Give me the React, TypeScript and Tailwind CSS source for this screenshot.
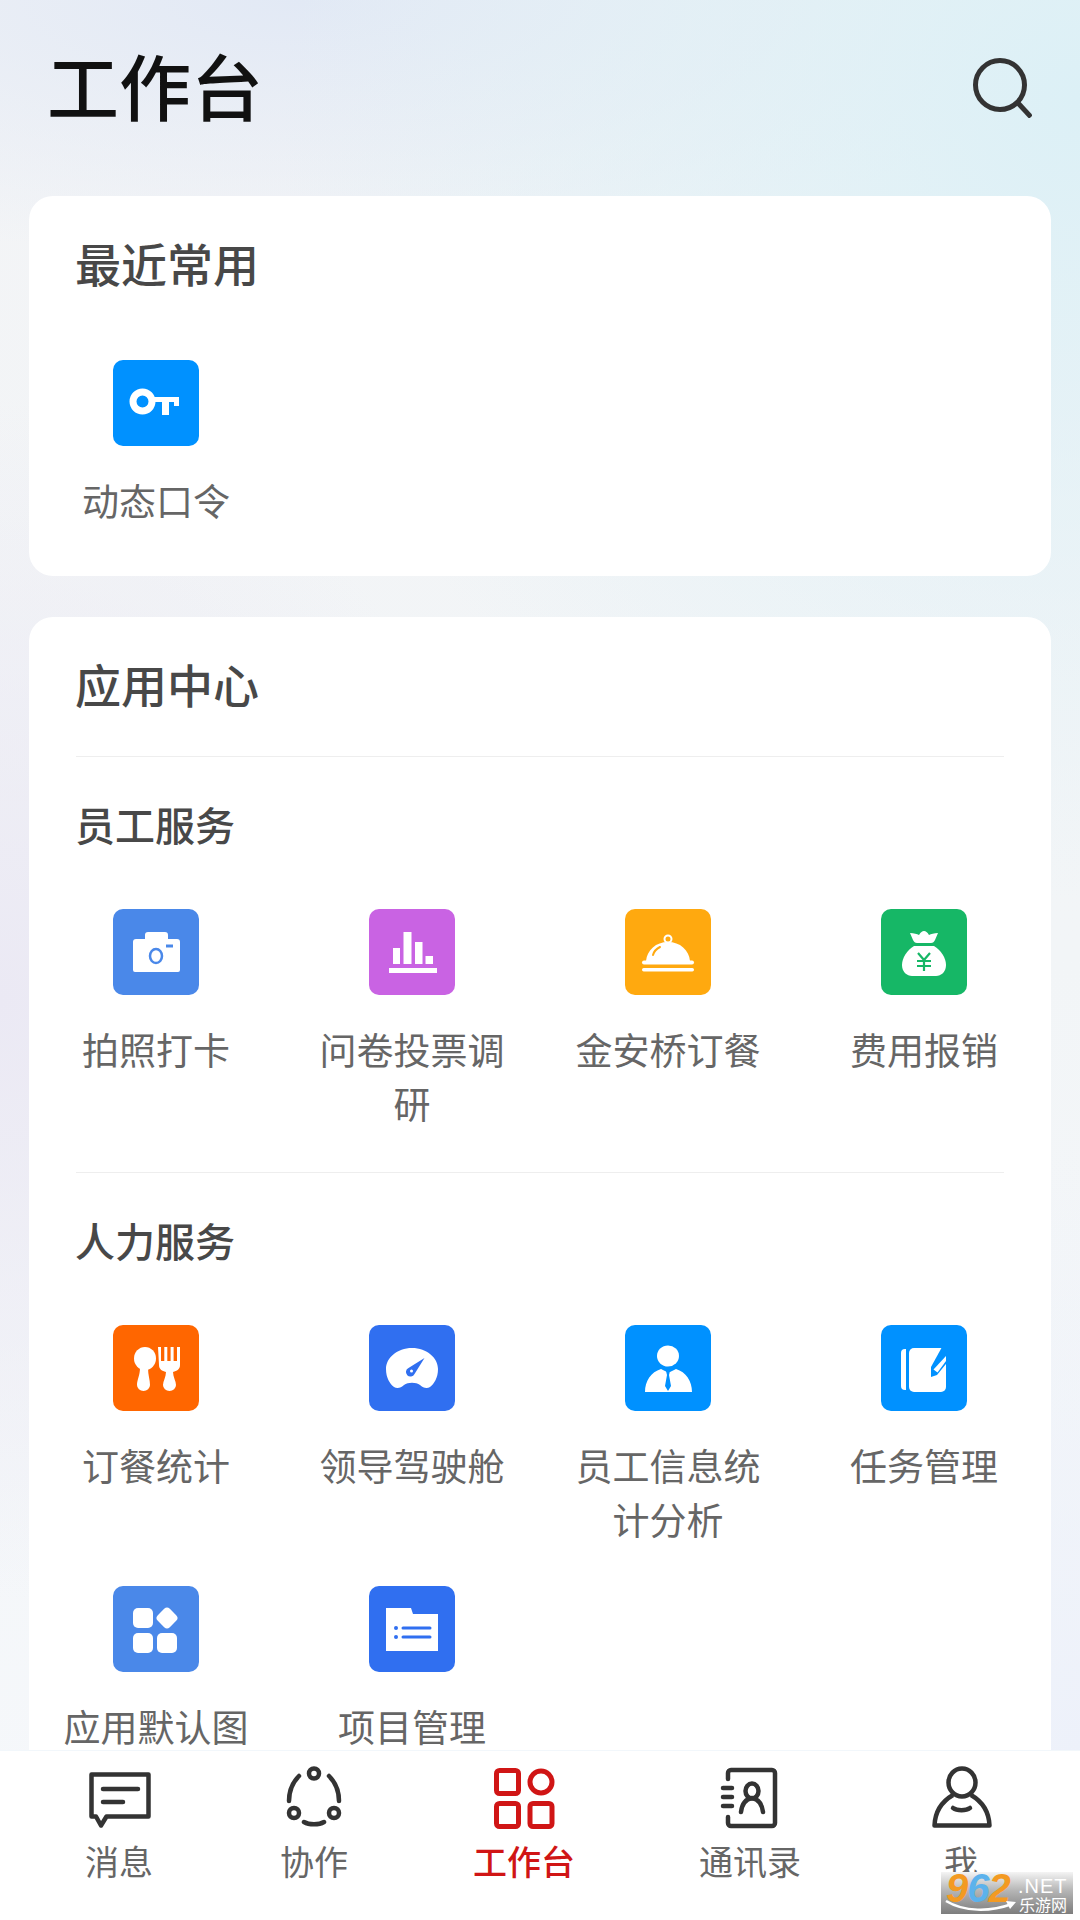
import React from 'react';

const FONT = "font-['Noto_Sans_CJK_SC','Noto_Sans',sans-serif]";

// App tile artwork, all on an 86x86 canvas
const KeyArt = () => (
  <>
    <ellipse cx="29.500" cy="41.500" rx="9.500" ry="9.500" fill="none" stroke="#fff" strokeWidth="7" />
    <path d="M38 37h28v9h-5v-4h-5v13h-7V42H38z" fill="#fff" />
  </>
);

const CameraArt = () => (
  <>
    <path d="M20 33a3 3 0 0 1 3-3h9v-4a3 3 0 0 1 3-3h17a3 3 0 0 1 3 3v4h9a3 3 0 0 1 3 3v28a2 2 0 0 1-2 2H22a2 2 0 0 1-2-2z" fill="#fff" />
    <ellipse cx="43" cy="47" rx="6" ry="7" fill="none" stroke="#4a88e9" strokeWidth="2.500" />
    <path d="M53 37h7" stroke="#4a88e9" strokeWidth="3" />
  </>
);

const ChartArt = () => (
  <path d="M24 39h7v16h-7zM34.500 23h8v32h-8zM46 33h7.500v22H46zM56.500 47H64v8h-7.500zM20 59h48v5H20z" fill="#fff" />
);

const DishArt = () => (
  <>
    <circle cx="43" cy="30" r="3.500" fill="none" stroke="#fff" strokeWidth="2" />
    <path d="M21 52C22 41 31 33 43 33s21 8 22 19z" fill="#fff" />
    <rect x="17" y="51.500" width="52" height="4" rx="2" fill="#fff" />
    <path d="M28 46c1-4 3-6 7-8" stroke="#ffa90f" strokeWidth="2" strokeLinecap="round" fill="none" />
    <rect x="17" y="59" width="52" height="3.500" rx="1.700" fill="#fff" />
  </>
);

const BagArt = () => (
  <>
    <path d="M29 24c4 0 7 1 9 2 2-3 3-4 5-4s3 1 5 4c2-1 5-2 9-2l-3 7c-1 2-2 3-4 3H36c-2 0-3-1-4-3z" fill="#fff" />
    <path d="M33 37h20c7 4 12 12 12 19 0 7-5 11-10 11H31c-5 0-10-4-10-11 0-7 5-15 12-19z" fill="#fff" />
    <path d="M37 44l6 7 6-7M36 52h14M36 57h14M43 51v11" stroke="#16b766" strokeWidth="2.200" fill="none" />
  </>
);

const CutleryArt = () => (
  <>
    <ellipse cx="32" cy="33.500" rx="11" ry="11.500" fill="#fff" />
    <path d="M27 43c0 7-3 12-3 17a6.500 6 0 0 0 13 0c0-5-2-10-2-17z" fill="#fff" />
    <path d="M45 22h3v14h3.300V22h3v14h3.300V22h3v14H64V22h3v18c0 4-3 6-7 7 0 5 3 9 3 13a6.500 6 0 0 1-13 0c0-4 3-8 3-13-4-1-7-3-7-7z" fill="#fff" />
  </>
);

const GaugeArt = () => (
  <>
    <path d="M43 23c15 0 26 10 26 21 0 9-4 15-8 18-3 2-7 1-10-2-4-3-12-3-16 0-3 3-7 4-10 2-4-3-8-9-8-18 0-11 11-21 26-21z" fill="#fff" />
    <path d="M55.500 33L45.500 49a4.500 4.500 0 1 1-6-6z" fill="#306ff0" />
    <circle cx="42.500" cy="46" r="1.500" fill="#fff" />
  </>
);

const PersonArt = () => (
  <>
    <ellipse cx="43" cy="31" rx="11" ry="10.500" fill="#fff" />
    <path d="M36 44c-10 3-16 12-16 23h47c0-11-6-20-16-23l-6 3h-3l-6-3z" fill="#fff" />
    <path d="M41 46h4l-1 4 2 11-3 5-3-5 2-11z" fill="#0091ff" />
  </>
);

const TaskArt = () => (
  <>
    <path d="M20 28a4 4 0 0 1 4-4h1v41h-1a4 4 0 0 1-4-4z" fill="#fff" />
    <rect x="28" y="23" width="37" height="44" rx="5" fill="#fff" />
    <path d="M61 22h8v12L56 50l-6 2V42z" fill="#0091ff" />
    <path d="M65 31v5l-8.500 11.500-4-3z" fill="#fff" />
  </>
);

const AppsArt = () => (
  <>
    <rect x="20" y="22" width="20" height="20" rx="5" fill="#fff" />
    <rect x="20" y="47" width="20" height="20" rx="5" fill="#fff" />
    <rect x="44" y="47" width="20" height="20" rx="5" fill="#fff" />
    <rect x="45.500" y="23.500" width="17" height="17" rx="4" fill="#fff" transform="rotate(45 54 32)" />
  </>
);

const FolderArt = () => (
  <>
    <path d="M17 22h25l2 6h25v37H17z" fill="#fff" />
    <circle cx="27" cy="42" r="2" fill="#306ff0" />
    <circle cx="27" cy="51" r="2" fill="#306ff0" />
    <path d="M34 42h27M34 51h27" stroke="#306ff0" strokeWidth="3" strokeLinecap="round" />
  </>
);

interface AppItem {
  name: string;
  tile: string;
  art: React.ReactNode;
}

const recent: AppItem[] = [{ name: '动态口令', tile: 'bg-[#0091ff]', art: <KeyArt /> }];

const staffApps: AppItem[] = [
  { name: '拍照打卡', tile: 'bg-[#4a88e9]', art: <CameraArt /> },
  { name: '问卷投票调研', tile: 'bg-[#c963e3]', art: <ChartArt /> },
  { name: '金安桥订餐', tile: 'bg-[#ffa90f]', art: <DishArt /> },
  { name: '费用报销', tile: 'bg-[#16b766]', art: <BagArt /> },
];

const hrApps: AppItem[] = [
  { name: '订餐统计', tile: 'bg-[#ff6600]', art: <CutleryArt /> },
  { name: '领导驾驶舱', tile: 'bg-[#306ff0]', art: <GaugeArt /> },
  { name: '员工信息统计分析', tile: 'bg-[#0091ff]', art: <PersonArt /> },
  { name: '任务管理', tile: 'bg-[#0091ff]', art: <TaskArt /> },
  { name: '应用默认图', tile: 'bg-[#4a88e9]', art: <AppsArt /> },
  { name: '项目管理', tile: 'bg-[#306ff0]', art: <FolderArt /> },
];

const AppGrid: React.FC<{ items: AppItem[] }> = ({ items }) => (
  <div className="-ml-[1px] grid grid-cols-[repeat(4,256px)] gap-y-[40px]">
    {items.map(item => (
      <div key={item.name} className="flex flex-col items-center">
        <div className={`h-[86px] w-[86px] rounded-[10px] ${item.tile}`}>
          <svg viewBox="0 0 86 86" className="h-full w-full">
            {item.art}
          </svg>
        </div>
        <div className="mt-[27px] w-[190px] break-all text-center text-[37px] leading-[54px] text-[#666]">
          {item.name}
        </div>
      </div>
    ))}
  </div>
);

const Section: React.FC<{ title: string; items: AppItem[] }> = ({ title, items }) => (
  <div>
    <div className="mx-[47px] h-px bg-[#eeeeee]" />
    <h3 className="mb-[57px] ml-[46px] mt-[39px] text-[40px] font-medium leading-[56px] text-[#484848]">{title}</h3>
    <AppGrid items={items} />
  </div>
);

const navIcon = 'fill-none stroke-[#333] stroke-[4.5]';

const navItems = [
  {
    label: '消息',
    icon: (
      <svg viewBox="0 0 70 70" className={`h-[70px] w-[70px] ${navIcon}`}>
        <path d="M7.500 11.500h57v42h-42l-5.500 9-5-9H7.500z" strokeLinejoin="round" />
        <path d="M19 26h35M19 39h20" strokeLinecap="round" />
      </svg>
    ),
  },
  {
    label: '协作',
    icon: (
      <svg viewBox="0 0 70 70" className={`h-[70px] w-[70px] ${navIcon}`}>
        <circle cx="35" cy="10.500" r="5" />
        <circle cx="15" cy="50" r="5" />
        <circle cx="55" cy="50" r="5" />
        <path d="M20 13C13 20 10 29 10 38M50 13c7 7 10 16 10 25M25 59c5 3 15 3 20 0" strokeLinecap="round" />
      </svg>
    ),
  },
  {
    label: '工作台',
    active: true,
    icon: (
      <svg viewBox="0 0 70 70" className="h-[70px] w-[70px] fill-none stroke-[#d01515] stroke-[5]">
        <rect x="7.500" y="7.500" width="22" height="23" rx="3" />
        <circle cx="52" cy="19" r="11" />
        <rect x="7.500" y="40.500" width="22" height="23" rx="3" />
        <rect x="41" y="40.500" width="22" height="23" rx="3" />
      </svg>
    ),
  },
  {
    label: '通讯录',
    icon: (
      <svg viewBox="0 0 70 70" className={`h-[70px] w-[70px] ${navIcon}`}>
        <path d="M13 16v-6a3 3 0 0 1 3-3h41a3 3 0 0 1 3 3v50a3 3 0 0 1-3 3H16a3 3 0 0 1-3-3v-6" strokeLinecap="round" />
        <path d="M8 25h9M8 34h9M8 43h9" strokeLinecap="round" />
        <ellipse cx="37" cy="28" rx="6.500" ry="7.500" />
        <path d="M26 49c1-8 5-13 11-14 6 1 10 6 11 14" strokeLinecap="round" />
      </svg>
    ),
  },
  {
    label: '我',
    icon: (
      <svg viewBox="0 0 70 70" className={`h-[70px] w-[70px] ${navIcon}`}>
        <ellipse cx="36" cy="19.500" rx="13.500" ry="14" />
        <path d="M27 32C15 39 9 50 8.500 62.500h55C63 50 57 39 45 32" strokeLinejoin="round" />
        <path d="M27 45c4 3 13 3 17 0" strokeLinecap="round" />
      </svg>
    ),
  },
];

export default function App() {
  return (
    <div
      className={`relative flex h-[1920px] w-[1080px] flex-col overflow-hidden bg-[radial-gradient(ellipse_800px_800px_at_1080px_100px,#dcf0f6_0%,transparent_100%),radial-gradient(ellipse_800px_260px_at_300px_0px,#e2e9f5_0%,transparent_100%),radial-gradient(ellipse_500px_600px_at_0px_1000px,#ebe9f4_0%,transparent_100%),radial-gradient(ellipse_500px_600px_at_1080px_1750px,#edf1fa_0%,transparent_100%),linear-gradient(180deg,#f3f4f6_0%,#f2f5f7_50%,#f6f8fb_100%)] ${FONT}`}
    >
      <main className="min-h-0 flex-1 overflow-hidden px-[29px]">
        <header className="mb-[20px] flex h-[176px] items-center justify-between pl-[18px] pr-[19px]">
          <h1 className="pb-[8px] text-[72px] font-medium leading-none text-[#111]">工作台</h1>
          <svg viewBox="0 0 60 60" className="h-[60px] w-[60px] fill-none stroke-[#333] stroke-[5]">
            <circle cx="28" cy="27" r="24.500" />
            <path d="M46 45l13 14" />
          </svg>
        </header>

        <section className="rounded-[24px] bg-white pb-[49px] pt-[36px]">
          <h2 className="mb-[68px] ml-[46px] text-[46px] font-medium leading-[60px] text-[#484848]">最近常用</h2>
          <AppGrid items={recent} />
        </section>

        <section className="mt-[41px] rounded-[24px] bg-white pb-[60px] pt-[36px]">
          <h2 className="mb-[43px] ml-[46px] text-[46px] font-medium leading-[60px] text-[#484848]">应用中心</h2>
          <Section title="员工服务" items={staffApps} />
          <div className="h-[42px]" />
          <Section title="人力服务" items={hrApps} />
        </section>
      </main>

      <nav className="grid h-[170px] shrink-0 grid-cols-[238px_152px_268px_184px_238px] border-t border-[#f2f7fb] bg-white">
        {navItems.map(item => (
          <div key={item.label} className="flex flex-col items-center pt-[12px]">
            <div className="h-[70px]">{item.icon}</div>
            <span
              className={`mt-[4px] text-[34px] leading-[48px] ${item.active ? 'font-medium text-[#d01515]' : 'text-[#666]'}`}
            >
              {item.label}
            </span>
          </div>
        ))}
      </nav>

      {/* site watermark stamped over the corner */}
      <div className="absolute bottom-[6px] right-[7px] h-[42px] w-[132px] overflow-hidden bg-[linear-gradient(180deg,#f4f4f4_0%,#b4b4b4_45%,#7d7d7d_100%)]">
        <div className="absolute left-[5px] top-[-6px] text-[40px] font-bold italic leading-[44px] tracking-[-1px] font-['Liberation_Sans',sans-serif]">
          <span className="text-[#f39a22]">9</span>
          <span className="text-[#5cb2ec]">6</span>
          <span className="text-[#f39a22]">2</span>
        </div>
        <div className="absolute left-[77px] top-[4px] text-[20px] leading-[20px] tracking-[1px] text-white font-['Liberation_Sans',sans-serif]">.NET</div>
        <div className="absolute left-[78px] top-[22px] text-[16px] leading-[20px] text-white">乐游网</div>
        <svg viewBox="0 0 76 14" className="absolute left-[3px] top-[27px] h-[14px] w-[76px] fill-none stroke-white stroke-[2.5]">
          <path d="M2 2c18 11 44 11 66 3" />
          <path d="M62 2l10 1-6 7z" fill="#fff" stroke="none" />
        </svg>
      </div>
    </div>
  );
}
